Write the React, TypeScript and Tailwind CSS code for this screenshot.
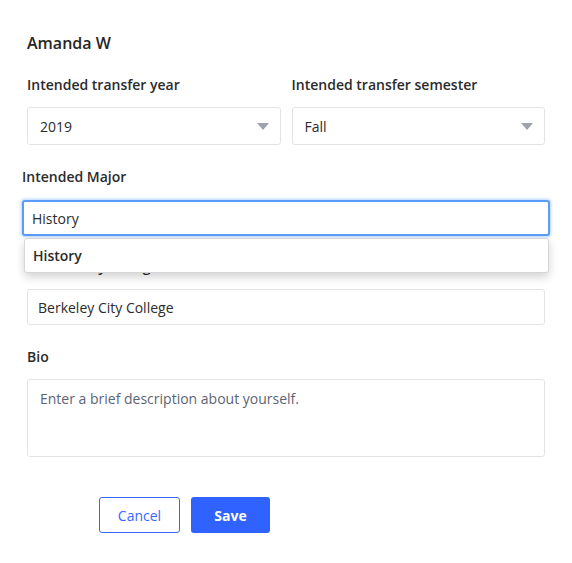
import React from "react";

function Caret() {
  return (
    <svg width="12" height="7" viewBox="0 0 12 7" className="shrink-0">
      <path d="M0 0 L12 0 L6 7 Z" fill="#9ea3ab" />
    </svg>
  );
}

function SelectBox({ value }: { value: string }) {
  return (
    <div className="flex h-[38px] items-center justify-between rounded-[3px] border border-[#e3e3e3] bg-white pl-[12px] pr-[11px] text-[14px] text-[#2b2b2b]">
      <span>{value}</span>
      <Caret />
    </div>
  );
}

export default function App() {
  return (
    <div
      className="min-h-[563px] w-[572px] bg-white pl-[27px] pr-[27px] pt-[31px] text-[#2b2b2b]"
      style={{ fontFamily: '"Open Sans", "Liberation Sans", sans-serif' }}
    >
      <div className="text-[16px] font-semibold leading-[24px] text-[#262626]">Amanda W</div>

      <div className="mt-[20px] grid grid-cols-2 gap-[11px]">
        <div className="flex flex-col">
          <label className="text-[14px] font-semibold leading-[20px]">Intended transfer year</label>
          <div className="mt-[12px]">
            <SelectBox value="2019" />
          </div>
        </div>
        <div className="flex flex-col">
          <label className="text-[14px] font-semibold leading-[20px]">Intended transfer semester</label>
          <div className="mt-[12px]">
            <SelectBox value="Fall" />
          </div>
        </div>
      </div>

      <div className="relative -ml-[5px] -mr-[5px] mt-[22px]">
        <label className="block text-[14px] font-semibold leading-[20px]">Intended Major</label>
        <div className="mt-[13px] flex h-[36px] items-center rounded-[3px] border-2 border-[#5b9cf8] bg-white pl-[8px] text-[14px] shadow-[0_0_3px_1px_rgba(91,156,248,0.45)]">
          History
        </div>
        <div className="absolute left-[2px] right-[1px] top-[71px] z-10 flex h-[35px] items-center rounded-[3px] border border-[#d6d6d6] bg-white pl-[8px] text-[14px] font-semibold text-[#2b2b2b] shadow-[0_4px_10px_rgba(0,0,0,0.18)]">
          History
        </div>
      </div>

      <label className="mt-[21px] block text-[14px] font-semibold leading-[20px]">Community College</label>
      <div className="mt-[12px] flex h-[36px] items-center rounded-[3px] border border-[#e3e3e3] bg-white pl-[10px] text-[14px]">
        Berkeley City College
      </div>

      <label className="mt-[22px] block text-[14px] font-semibold leading-[20px]">Bio</label>
      <div className="mt-[12px] h-[78px] rounded-[3px] border border-[#e3e3e3] bg-white pl-[12px] pt-[9px] text-[14px] leading-[20px] text-[#5c6474]">
        Enter a brief description about yourself.
      </div>

      <div className="mt-[40px] flex gap-[11px] pl-[72px]">
        <button className="flex h-[36px] w-[81px] items-center justify-center rounded-[3px] border border-[#3a66ff] bg-white text-[14px] font-medium text-[#3a66ff]">
          Cancel
        </button>
        <button className="flex h-[36px] w-[79px] items-center justify-center rounded-[3px] bg-[#3062ff] text-[14px] font-bold text-white">
          Save
        </button>
      </div>
    </div>
  );
}
